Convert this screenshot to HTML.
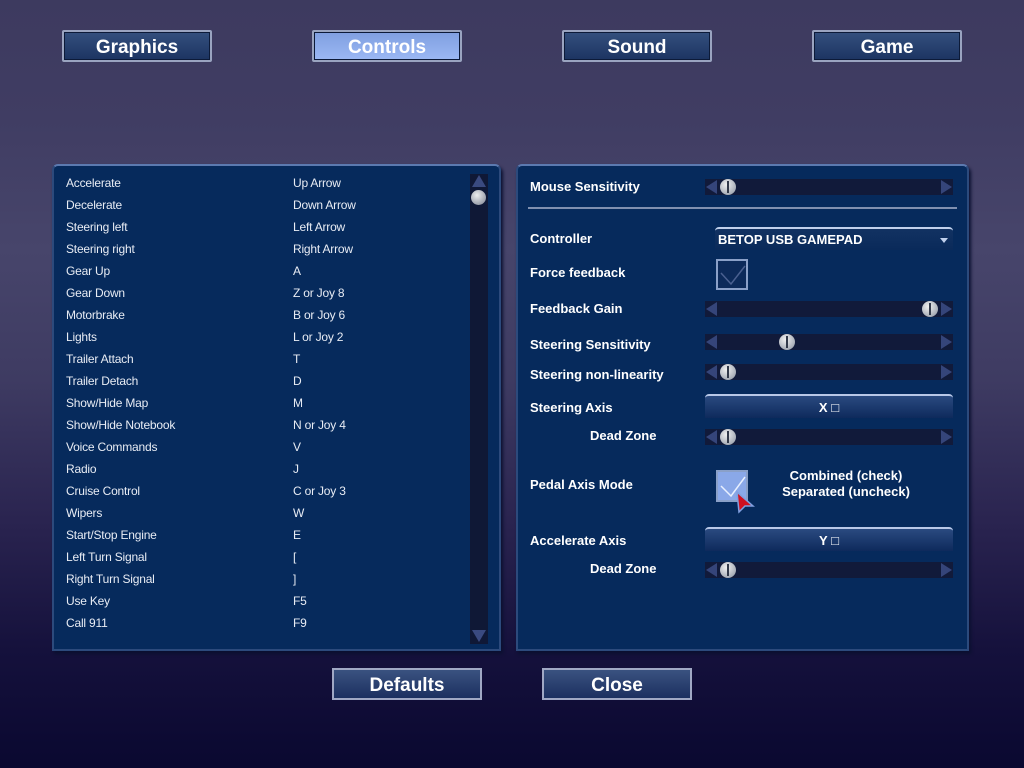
<!DOCTYPE html>
<html><head><style>
*{margin:0;padding:0;box-sizing:border-box}
body{width:1024px;height:768px;overflow:hidden;position:relative;font-family:"Liberation Sans",sans-serif;
background:linear-gradient(180deg,#3d3a5f 0px,#403d63 120px,#47456b 250px,#3e3b62 380px,#2a2450 520px,#15113c 650px,#0a0830 768px);}
.tb{position:absolute;top:30px;width:150px;height:32px;border:2px solid #9aa4c0;border-radius:2px;
background:linear-gradient(180deg,#34507e,#1c3461);color:#fff;font-weight:bold;font-size:19px;text-align:center;line-height:31px;box-shadow:inset 0 0 0 1px #0c1a38}
.tb.on{background:linear-gradient(180deg,#7f9fe0,#9bb8f4);}
.panel{position:absolute;top:164px;height:487px;background:#062a5c;border:2px solid #2c4a7c;border-top-color:#5c7ab0;border-radius:6px 6px 0 0;box-shadow:2px 3px 3px #0b1030}
.row{position:absolute;left:66px;font-size:12px;color:#e8ecf4;letter-spacing:-0.2px}
.k{position:absolute;left:293px;font-size:12px;color:#e8ecf4;letter-spacing:-0.2px}
.lb{position:absolute;left:530px;font-size:13px;font-weight:bold;color:#fff}
.sl{position:absolute;left:705px;width:248px;height:16px;background:#111a3a}
.sl .la{position:absolute;left:1px;top:1px;width:0;height:0;border-top:7px solid transparent;border-bottom:7px solid transparent;border-right:11px solid #35457a}
.sl .ra{position:absolute;right:1px;top:1px;width:0;height:0;border-top:7px solid transparent;border-bottom:7px solid transparent;border-left:11px solid #35457a}
.sl .th{position:absolute;top:0;width:16px;height:16px;border-radius:50%;background:radial-gradient(circle at 40% 35%,#f0f0f0,#8a92a0);}
.sl .th:after{content:"";position:absolute;left:7px;top:2px;width:2px;height:12px;background:#333a4a}
.bt{position:absolute;left:705px;width:248px;height:24px;background:linear-gradient(180deg,#2a4a80,#0e2a5c);border-top:2px solid #b8c8e8;border-radius:4px 4px 0 0;color:#fff;font-weight:bold;font-size:13px;text-align:center;line-height:23px}
.bb{position:absolute;top:668px;width:150px;height:32px;border:2px solid #a0a8c4;background:linear-gradient(180deg,#3a5280,#1c3060);color:#fff;font-weight:bold;font-size:19px;text-align:center;line-height:31px}
</style></head><body>
<div class="tb" style="left:62px">Graphics</div>
<div class="tb on" style="left:312px">Controls</div>
<div class="tb" style="left:562px">Sound</div>
<div class="tb" style="left:812px">Game</div>

<div class="panel" style="left:52px;width:449px"></div>
<div style="position:absolute;left:470px;top:174px;width:18px;height:470px;background:#0f1836"></div>
<div style="position:absolute;left:472px;top:175px;border-left:7px solid transparent;border-right:7px solid transparent;border-bottom:12px solid #3a4a80"></div>
<div style="position:absolute;left:471px;top:190px;width:15px;height:15px;border-radius:50%;background:radial-gradient(circle at 40% 35%,#eee,#7a8090)"></div>
<div style="position:absolute;left:472px;top:630px;border-left:7px solid transparent;border-right:7px solid transparent;border-top:12px solid #3a4a80"></div>

<div class="panel" style="left:516px;width:453px"></div>
<div style="position:absolute;left:528px;top:207px;width:429px;height:2px;background:#8090b0"></div>

<div class="row" style="top:176px">Accelerate</div><div class="k" style="top:176px">Up Arrow</div>
<div class="row" style="top:198px">Decelerate</div><div class="k" style="top:198px">Down Arrow</div>
<div class="row" style="top:220px">Steering left</div><div class="k" style="top:220px">Left Arrow</div>
<div class="row" style="top:242px">Steering right</div><div class="k" style="top:242px">Right Arrow</div>
<div class="row" style="top:264px">Gear Up</div><div class="k" style="top:264px">A</div>
<div class="row" style="top:286px">Gear Down</div><div class="k" style="top:286px">Z or Joy 8</div>
<div class="row" style="top:308px">Motorbrake</div><div class="k" style="top:308px">B or Joy 6</div>
<div class="row" style="top:330px">Lights</div><div class="k" style="top:330px">L or Joy 2</div>
<div class="row" style="top:352px">Trailer Attach</div><div class="k" style="top:352px">T</div>
<div class="row" style="top:374px">Trailer Detach</div><div class="k" style="top:374px">D</div>
<div class="row" style="top:396px">Show/Hide Map</div><div class="k" style="top:396px">M</div>
<div class="row" style="top:418px">Show/Hide Notebook</div><div class="k" style="top:418px">N or Joy 4</div>
<div class="row" style="top:440px">Voice Commands</div><div class="k" style="top:440px">V</div>
<div class="row" style="top:462px">Radio</div><div class="k" style="top:462px">J</div>
<div class="row" style="top:484px">Cruise Control</div><div class="k" style="top:484px">C or Joy 3</div>
<div class="row" style="top:506px">Wipers</div><div class="k" style="top:506px">W</div>
<div class="row" style="top:528px">Start/Stop Engine</div><div class="k" style="top:528px">E</div>
<div class="row" style="top:550px">Left Turn Signal</div><div class="k" style="top:550px">[</div>
<div class="row" style="top:572px">Right Turn Signal</div><div class="k" style="top:572px">]</div>
<div class="row" style="top:594px">Use Key</div><div class="k" style="top:594px">F5</div>
<div class="row" style="top:616px">Call 911</div><div class="k" style="top:616px">F9</div>

<div class="lb" style="top:179px">Mouse Sensitivity</div>
<div class="sl" style="top:179px"><div class="la"></div><div class="th" style="left:15px"></div><div class="ra"></div></div>
<div class="lb" style="top:231px">Controller</div>
<div style="position:absolute;left:715px;top:227px;width:238px;height:23px;border-top:2px solid #c0d0ec;border-radius:4px 4px 0 0;background:linear-gradient(180deg,#123262,#0a2a5a);color:#fff;font-weight:bold;font-size:13px;line-height:22px;padding-left:3px">BETOP USB GAMEPAD<span style="position:absolute;right:5px;top:9px;border-left:4px solid transparent;border-right:4px solid transparent;border-top:5px solid #c0d0ec"></span></div>
<div class="lb" style="top:265px">Force feedback</div>
<div style="position:absolute;left:716px;top:259px;width:32px;height:31px;border:2px solid #8aa0c8;background:#0c2a5a"><svg width="28" height="27"><path d="M3 12 L13 23 L27 5" stroke="#4a6090" stroke-width="1.5" fill="none"/></svg></div>
<div class="lb" style="top:301px">Feedback Gain</div>
<div class="sl" style="top:301px"><div class="la"></div><div class="th" style="left:217px"></div><div class="ra"></div></div>
<div class="lb" style="top:337px">Steering Sensitivity</div>
<div class="sl" style="top:334px"><div class="la"></div><div class="th" style="left:74px"></div><div class="ra"></div></div>
<div class="lb" style="top:367px">Steering non-linearity</div>
<div class="sl" style="top:364px"><div class="la"></div><div class="th" style="left:15px"></div><div class="ra"></div></div>
<div class="lb" style="top:400px">Steering Axis</div>
<div class="bt" style="top:394px">X &#9633;</div>
<div class="lb" style="top:428px;left:590px">Dead Zone</div>
<div class="sl" style="top:429px"><div class="la"></div><div class="th" style="left:15px"></div><div class="ra"></div></div>
<div class="lb" style="top:477px">Pedal Axis Mode</div>
<div style="position:absolute;left:716px;top:470px;width:32px;height:32px;border:2px solid #8aa0c8;background:#8aa8e8"><svg width="28" height="28"><path d="M3 14 L13 24 L27 5" stroke="#e8f0ff" stroke-width="1.5" fill="none"/></svg></div>
<svg style="position:absolute;left:735px;top:490px" width="20" height="24"><path d="M2 2 L18 16 L10 16 L4 22 Z" fill="#d01020" stroke="#80a0e0" stroke-width="1.5"/></svg>
<div style="position:absolute;left:760px;top:468px;width:172px;text-align:center;color:#fff;font-weight:bold;font-size:13px;line-height:16px">Combined (check)<br>Separated (uncheck)</div>
<div class="lb" style="top:533px">Accelerate Axis</div>
<div class="bt" style="top:527px">Y &#9633;</div>
<div class="lb" style="top:561px;left:590px">Dead Zone</div>
<div class="sl" style="top:562px"><div class="la"></div><div class="th" style="left:15px"></div><div class="ra"></div></div>

<div class="bb" style="left:332px">Defaults</div>
<div class="bb" style="left:542px">Close</div>
</body></html>
